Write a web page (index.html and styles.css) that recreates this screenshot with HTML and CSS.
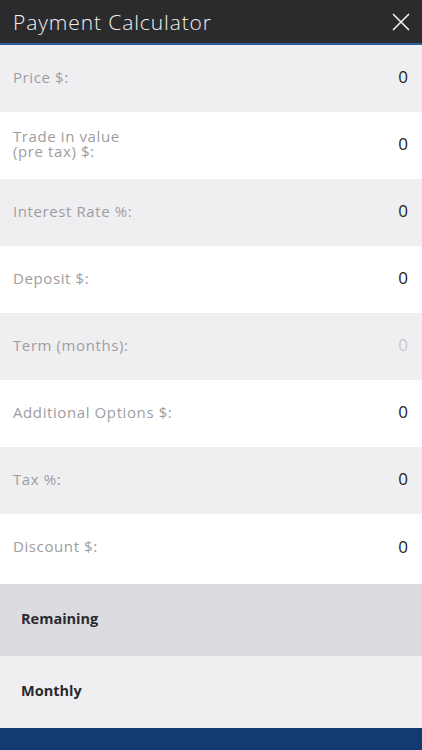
FILE: index.html
```html
<!DOCTYPE html>
<html>
<head>
<meta charset="utf-8">
<link rel="stylesheet" href="styles.css">
</head>
<body>
<div class="app">
  <header class="topbar">
    <h1 class="title">Payment Calculator</h1>
    <svg class="close" width="18" height="18" viewBox="0 0 18 18"><path d="M1 1 L17 17 M17 1 L1 17" stroke="#f2f2f2" stroke-width="1.6" fill="none"/></svg>
  </header>
  <div class="rows">
    <div class="row alt"><span class="label">Price $:</span><span class="value">0</span></div>
    <div class="row"><span class="label two">Trade in value<br>(pre tax) $:</span><span class="value">0</span></div>
    <div class="row alt"><span class="label">Interest Rate %:</span><span class="value">0</span></div>
    <div class="row"><span class="label">Deposit $:</span><span class="value">0</span></div>
    <div class="row alt"><span class="label">Term (months):</span><span class="value faint">0</span></div>
    <div class="row"><span class="label">Additional Options $:</span><span class="value">0</span></div>
    <div class="row alt"><span class="label">Tax %:</span><span class="value">0</span></div>
    <div class="row last"><span class="label">Discount $:</span><span class="value">0</span></div>
  </div>
  <div class="result remaining">Remaining</div>
  <div class="result monthly">Monthly</div>
  <div class="bottombar"></div>
</div>
</body>
</html>
```
FILE: styles.css
```css
html, body {
  margin: 0;
  padding: 0;
  background: #ffffff;
}
.app {
  width: 422px;
  height: 750px;
  overflow: hidden;
  display: flex;
  flex-direction: column;
  font-family: "Open Sans", "Liberation Sans", sans-serif;
}
.topbar {
  height: 43px;
  flex: 0 0 43px;
  background: #2b2a2d;
  border-bottom: 2px solid #2c5d9a;
  display: flex;
  align-items: center;
  justify-content: space-between;
  padding: 0 12px 0 13px;
}
.title {
  margin: 0;
  font-size: 21px;
  font-weight: 300;
  color: #f1f1f1;
  letter-spacing: 0.9px;
}
.close {
  display: block;
}
.rows {
  display: flex;
  flex-direction: column;
}
.row {
  height: 67px;
  box-sizing: border-box;
  display: flex;
  align-items: center;
  justify-content: space-between;
  padding: 0 14px 4px 13px;
  background: #ffffff;
}
.row.alt {
  background: #efeef1;
}
.row.last {
  height: 70px;
  padding-bottom: 6px;
}
.label {
  font-size: 15px;
  color: #9e9da1;
  font-weight: 400;
  letter-spacing: 0.6px;
}
.label.two {
  line-height: 15px;
}
.value {
  font-size: 17px;
  color: #232226;
}
.value.faint {
  color: #c9c8cb;
}
.result {
  height: 72px;
  flex: 0 0 72px;
  box-sizing: border-box;
  display: flex;
  align-items: center;
  padding: 0 0 4px 21px;
  font-size: 14.5px;
  font-weight: 700;
  color: #2b2a2e;
}
.remaining {
  background: #dcdbdf;
}
.monthly {
  background: #efeef1;
}
.bottombar {
  flex: 1;
  background: #133a71;
}
```
